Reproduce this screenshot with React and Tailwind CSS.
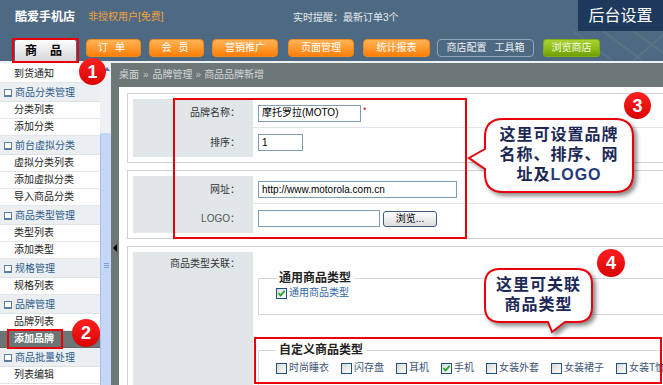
import React from "react";

const sideItems = [
  { t: "到货通知" },
  { h: "商品分类管理" },
  { t: "分类列表" },
  { t: "添加分类" },
  { h: "前台虚拟分类" },
  { t: "虚拟分类列表" },
  { t: "添加虚拟分类" },
  { t: "导入商品分类" },
  { h: "商品类型管理" },
  { t: "类型列表" },
  { t: "添加类型" },
  { h: "规格管理" },
  { t: "规格列表" },
  { h: "品牌管理" },
  { t: "品牌列表" },
  { t: "添加品牌", active: true },
  { h: "商品批量处理" },
  { t: "列表编辑" },
];

function OrangeBtn({ className, children }) {
  return (
    <div
      className={
        "flex h-[18px] items-center justify-center gap-[7px] rounded-[4px] border border-[#f08a1c] bg-linear-to-b from-[#ffb355] via-[#ff9a2e] to-[#ff7e00] text-[10px] text-white " +
        className
      }
    >
      {children}
    </div>
  );
}

function Header() {
  return (
    <div className="relative h-[61px] bg-[#4e6a83]">
      <svg className="absolute right-0 top-[31px] h-[30px] w-[90px]" viewBox="0 0 90 30">
        <path d="M0 0 L40 30 M30 0 L70 30 M60 0 L90 22 M90 4 L60 30" stroke="rgba(255,255,255,0.06)" strokeWidth="2" fill="none" />
      </svg>
      <div className="flex h-[31px] items-center">
        <div className="w-[88px] pl-[15px] pt-[3px] text-[12px] font-bold text-white">酷爱手机店</div>
        <div className="w-[205px] pt-[3px] text-[10px] text-[#f2a23a]">非授权用户[免费]</div>
        <div className="flex-1 pt-[4px] text-[10px] text-[#e6ebef]">实时提醒：最新订单3个</div>
        <div className="flex h-[31px] w-[85px] items-center justify-center bg-[#1d3a5c] text-[16px] text-white">后台设置</div>
      </div>
      <div className="relative flex h-[30px] items-start pl-[15px] pt-[8px]">
        <div className="mt-[1px] flex h-[22px] w-[61px] items-center justify-center gap-[13px] rounded-t-[2px] bg-linear-to-b from-[#fdfdfd] to-[#d4d6d7] pr-[4px] text-[12px] font-bold text-black">
          <span>商</span>
          <span>品</span>
        </div>
        <OrangeBtn className="ml-[10px] w-[55px] pr-[4px]">
          <span>订</span>
          <span>单</span>
        </OrangeBtn>
        <OrangeBtn className="ml-[8px] w-[55px] pr-[3px]">
          <span>会</span>
          <span>员</span>
        </OrangeBtn>
        <OrangeBtn className="ml-[8px] w-[66px]">营销推广</OrangeBtn>
        <OrangeBtn className="ml-[10px] w-[66px]">页面管理</OrangeBtn>
        <OrangeBtn className="ml-[9px] w-[67px]">统计报表</OrangeBtn>
        <div className="ml-[7px] flex h-[18px] w-[97px] items-center justify-center gap-[8px] rounded-[4px] border border-[#8ea4b9] text-[10px] text-[#eef2f5]">
          <span>商店配置</span>
          <span>工具箱</span>
        </div>
        <div className="ml-[9px] flex h-[18px] w-[57px] items-center justify-center rounded-[3px] border border-[#7fae10] bg-linear-to-b from-[#a9d232] via-[#8fbf1a] to-[#6d9f00] text-[10px] text-[#f4fae6]">
          浏览商店
        </div>
      </div>
    </div>
  );
}

function Sidebar() {
  return (
    <div className="w-[100px] shrink-0 bg-white pt-[3px]">
      {sideItems.map((it, i) =>
        it.h ? (
          <div key={i} className="flex h-[19px] items-center border-b border-[#dde2e5] bg-[#eceff1] pl-[4px] pt-[2px] text-[#2b5b8c]">
            <span className="h-[8px] w-[8px] border border-b-2 border-[#5b7ea3] bg-white" />
            <span className="ml-[3px]">{it.h}</span>
          </div>
        ) : it.active ? (
          <div key={i} className="flex h-[17px] items-center border-b border-[#5e6869] bg-[#6b7576] pl-[14px] font-bold text-white">
            {it.t}
          </div>
        ) : (
          <div key={i} className="flex h-[17px] items-center border-b border-[#e3e7ea] pl-[14px] text-[#222]">
            {it.t}
          </div>
        )
      )}
    </div>
  );
}

function Scrollbar() {
  return (
    <div className="flex w-[11px] shrink-0 flex-col bg-[#eef0f3]">
      <div className="flex h-[11px] items-center justify-end pr-[1px]">
        <span className="h-0 w-0 border-x-[3px] border-b-[4px] border-x-transparent border-b-[#4d78c8]" />
      </div>
      <div className="h-[59px]" />
      <div className="flex flex-1 flex-col items-center rounded-t-[2px] border-l border-[#a8c0ee] bg-[#c5d6f6] pt-[130px]">
        <span className="h-[1px] w-[5px] bg-[#7d9fde]" />
        <span className="mt-[1px] h-[1px] w-[5px] bg-[#7d9fde]" />
        <span className="mt-[1px] h-[1px] w-[5px] bg-[#7d9fde]" />
      </div>
    </div>
  );
}

function Divider() {
  return (
    <div className="w-[7px] shrink-0 bg-[#6e7778] pl-[2px] pt-[181px]">
      <span className="block h-0 w-0 border-y-[4px] border-r-[4px] border-y-transparent border-r-black" />
    </div>
  );
}

function Input({ className, children }) {
  return (
    <div className={"flex h-[17px] items-center border border-[#7f9db9] bg-white px-[3px] text-[10px] text-black " + className}>
      {children}
    </div>
  );
}

function Row({ label, className, children, labelClass }) {
  return (
    <div className={"flex " + className}>
      <div className={"flex w-[120px] items-center justify-end bg-[#e1e6e9] pr-[13px] " + (labelClass || "text-[#333]")}>{label}</div>
      <div className="flex flex-1 items-center pl-[5px]">{children}</div>
    </div>
  );
}

function Cb({ checked }) {
  return (
    <span className="flex h-[11px] w-[11px] shrink-0 items-center justify-center border border-[#1c5180] bg-linear-to-br from-[#d8d8d2] to-white">
      {checked && (
        <svg viewBox="0 0 9 9" className="h-[9px] w-[9px]">
          <path d="M1.5 4.2 L3.6 6.5 L7.6 1.8" stroke="#22a322" strokeWidth="1.8" fill="none" />
        </svg>
      )}
    </span>
  );
}

function Opt({ checked, label, color }) {
  return (
    <div className="flex items-center gap-[2px]">
      <Cb checked={checked} />
      <span className={color || "text-[#3d5377]"}>{label}</span>
    </div>
  );
}

function Main() {
  return (
    <div className="flex min-w-0 flex-1 flex-col bg-[#6e7778]">
      <div className="flex h-[24px] shrink-0 items-center pl-[1px] text-[#d3d7d9]">
        <span>桌面</span>
        <span className="mx-[4px] text-[#c4c9cb]">»</span>
        <span>品牌管理</span>
        <span className="mx-[3px] text-[#c4c9cb]">»</span>
        <span>商品品牌新增</span>
      </div>
      <div className="ml-[1px] flex-1 overflow-hidden bg-white pl-[8px] pt-[6px]">
        <div className="w-[560px] border border-[#cdd2d6] p-[5px]">
          <Row label="品牌名称：" className="h-[29px] border-b border-[#e1e5e8]">
            <Input className="w-[103px]">摩托罗拉(MOTO)</Input>
            <span className="ml-[2px] -mt-[6px] text-[9px] text-[#e00000]">*</span>
          </Row>
          <Row label="排序：" className="h-[29px]">
            <Input className="w-[45px]">1</Input>
          </Row>
        </div>
        <div className="mt-[7px] w-[560px] border border-[#cdd2d6] p-[5px]">
          <Row label="网址：" className="h-[28px] border-b border-[#e1e5e8]">
            <Input className="w-[199px]">http://www.motorola.com.cn</Input>
          </Row>
          <Row label="LOGO：" className="h-[29px]" labelClass="text-[#555]">
            <Input className="w-[122px]" />
            <div className="ml-[3px] flex h-[16px] w-[54px] items-center justify-center rounded-[3px] border border-[#3d5a7e] bg-linear-to-b from-white to-[#dcdcdc] text-[10px] text-black">
              浏览...
            </div>
          </Row>
        </div>
        <div className="mt-[7px] h-[200px] w-[560px] border border-[#cdd2d6] px-[5px] pt-[5px]">
          <div className="flex h-full">
            <div className="w-[120px] bg-[#e1e6e9] pr-[13px] pt-[6px] text-right leading-[12px] text-[#333]">商品类型关联：</div>
            <div className="flex-1 pl-[5px]">
              <fieldset className="mt-[19px] w-[420px] border border-[#d3d8dc] pb-[14px] pl-[17px]">
                <legend className="px-[3px] text-[12px] font-bold leading-[14px] text-[#222]">通用商品类型</legend>
                <div className="mt-[1px] flex h-[14px] items-center">
                  <Opt checked label="通用商品类型" color="text-[#2f66a6]" />
                </div>
              </fieldset>
              <fieldset className="mt-[28px] w-[420px] border border-[#d3d8dc] pb-[14px] pl-[17px]">
                <legend className="px-[3px] text-[12px] font-bold leading-[14px] text-[#222]">自定义商品类型</legend>
                <div className="mt-[4px] flex h-[14px] items-center gap-[12px] whitespace-nowrap">
                  <Opt label="时尚睡衣" />
                  <Opt label="闪存盘" />
                  <Opt label="耳机" />
                  <Opt checked label="手机" />
                  <Opt label="女装外套" />
                  <Opt label="女装裙子" />
                  <Opt label="女装T恤" />
                </div>
              </fieldset>
            </div>
          </div>
        </div>
      </div>
    </div>
  );
}

function Num({ className, n }) {
  return (
    <div
      className={
        "absolute flex items-center justify-center rounded-full bg-linear-to-b from-[#ff2020] to-[#d80000] font-['Liberation_Sans',sans-serif] text-[18px] font-bold text-white " +
        className
      }
    >
      {n}
    </div>
  );
}

export default function App() {
  return (
    <div className="relative h-[385px] w-[663px] overflow-hidden bg-white font-['Liberation_Sans','Noto_Sans_CJK_SC',sans-serif] text-[10px] leading-none">
      <Header />
      <div className="h-[2px] bg-[#eef1f3]" />
      <div className="flex h-[322px]">
        <Sidebar />
        <Scrollbar />
        <Divider />
        <Main />
      </div>

      {/* red highlight boxes */}
      <div className="absolute left-[12px] top-[38px] h-[25px] w-[67px] border-2 border-[#e8000b]" />
      <div className="absolute left-[7px] top-[329px] h-[20px] w-[56px] border-2 border-[#e8000b]" />
      <div className="absolute left-[173px] top-[98px] h-[141px] w-[294px] border-2 border-[#e8000b]" />
      <div className="absolute left-[254px] top-[337px] h-[47px] w-[408px] border-2 border-[#e8000b]" />

      {/* numbers */}
      <Num className="left-[79px] top-[58px] h-[27px] w-[27px]" n="1" />
      <Num className="left-[72px] top-[319px] h-[28px] w-[28px]" n="2" />
      <Num className="left-[624px] top-[92px] h-[27px] w-[27px]" n="3" />
      <Num className="left-[597px] top-[249px] h-[28px] w-[28px]" n="4" />

      {/* bubble 3 */}
      <svg className="absolute left-[465px] top-[115px] h-[85px] w-[175px] drop-shadow-[3px_3px_2px_rgba(0,0,0,0.45)]" viewBox="0 0 175 85">
        <path
          d="M38 4 H150 Q168 4 168 22 V59 Q168 77 150 77 H38 Q20 77 20 59 V54 L4 43 L20 34 V22 Q20 4 38 4 Z"
          fill="white"
          stroke="#e8000b"
          strokeWidth="2"
        />
      </svg>
      <div className="absolute left-[485px] top-[125px] w-[148px] text-center text-[16px] font-bold leading-[20px] tracking-[1px] text-[#1b2856]">
        <div>这里可设置品牌</div>
        <div>名称、排序、网</div>
        <div>
          址及<span className="text-[#243a78]">LOGO</span>
        </div>
      </div>

      {/* bubble 4 */}
      <svg className="absolute left-[480px] top-[264px] h-[75px] w-[120px] drop-shadow-[3px_3px_2px_rgba(0,0,0,0.45)]" viewBox="0 0 120 75">
        <path
          d="M20 5 H97 Q112 5 112 20 V43 Q112 58 97 58 H85 L72 68 L68 58 H20 Q5 58 5 43 V20 Q5 5 20 5 Z"
          fill="white"
          stroke="#e8000b"
          strokeWidth="2"
        />
      </svg>
      <div className="absolute left-[485px] top-[275px] w-[107px] text-center text-[16px] font-bold leading-[20px] tracking-[1px] text-[#1b2856]">
        <div>这里可关联</div>
        <div>商品类型</div>
      </div>
    </div>
  );
}
